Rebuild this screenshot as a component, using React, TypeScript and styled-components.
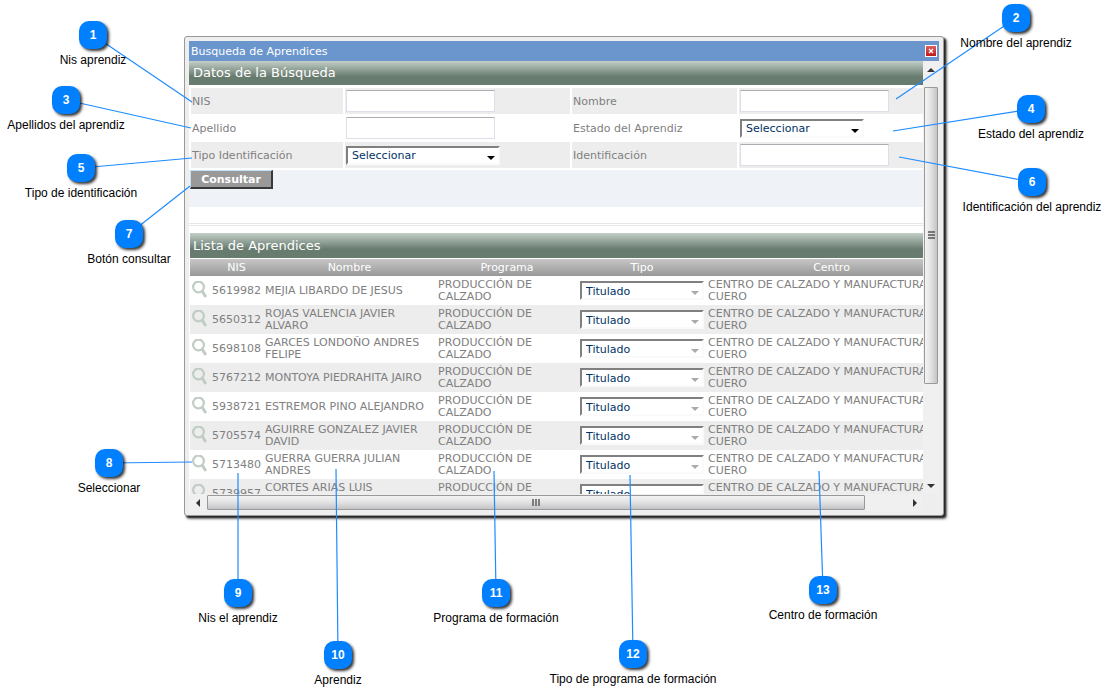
import React from "react";
import styled, { createGlobalStyle } from "styled-components";

const GlobalStyle = createGlobalStyle`
  *, *::before, *::after { box-sizing: border-box; }
  body { margin: 0; background: #fff; }
`;

const verdana = `Verdana, "DejaVu Sans", sans-serif`;
const arial = `Arial, "Liberation Sans", sans-serif`;

const Canvas = styled.main`
  position: relative;
  min-height: 100vh;
  padding: 36px 165px 0 184px;
  overflow: hidden;
  font-family: ${verdana};
  font-size: 11px;
  color: #808080;
`;

const Dialog = styled.section`
  padding: 4px;
  background: #eeeeee;
  border: 1px solid #999;
  border-radius: 3px;
  box-shadow: 2px 2px 2px #222, 3px 3px 3px rgba(0, 0, 0, 0.4);
`;

const TitleBar = styled.header`
  display: flex;
  align-items: center;
  justify-content: space-between;
  height: 20px;
  padding: 0 2px;
  background: #6a96cd;
  color: #fff;
`;

const DialogTitle = styled.h1`
  margin: 0;
  font-size: 11px;
  line-height: 20px;
  padding-top: 2px;
  font-weight: normal;
`;

const CloseButton = styled.button`
  display: flex;
  align-items: center;
  justify-content: center;
  width: 12px;
  height: 12px;
  padding: 0;
  border: 1px solid #fff;
  background: linear-gradient(#e06060, #c01818);
`;

const Body = styled.div`
  display: grid;
  grid-template-columns: minmax(0, 1fr) 16px;
  grid-template-rows: 433px 17px;
`;

const Viewport = styled.div`
  overflow: hidden;
  background: #fff;
`;

const SectionTitle = styled.h2<{ $indent?: boolean }>`
  margin: 0;
  margin-left: ${(p) => (p.$indent ? "1px" : "0")};
  padding-left: ${(p) => (p.$indent ? "3px" : "4px")};
  height: ${(p) => (p.$indent ? "25px" : "24px")};
  line-height: ${(p) => (p.$indent ? "26px" : "24px")};
  font-size: 13px;
  font-weight: normal;
  color: #fff;
  background: linear-gradient(#c3cfc8, #687b6f 65%);
`;

const SearchForm = styled.form`
  padding-top: 3px;
  border-bottom: 3px double #e6e6e6;
`;

const Fields = styled.div`
  display: grid;
  grid-template-columns: 152px 225px 165px minmax(0, 1fr);
  grid-auto-rows: 26px;
  gap: 1px 2px;
  padding-left: 2px;
`;

const FieldLabel = styled.label<{ $shaded: boolean }>`
  padding-left: 1px;
  line-height: 28px;
  background: ${(p) => (p.$shaded ? "#ededed" : "#fff")};
`;

const FieldCell = styled.div<{ $shaded: boolean }>`
  display: flex;
  align-items: center;
  padding-left: 1px;
  background: ${(p) => (p.$shaded ? "#ededed" : "#fff")};
`;

const TextInput = styled.input`
  width: 149px;
  height: 22px;
  border: 1px solid #dcdfe8;
  border-top-color: #abadb3;
  border-radius: 1px;
  background: #fff;
  font: 11px ${verdana};
`;

const SelectBox = styled.span<{ $width: number }>`
  position: relative;
  display: block;
  width: ${(p) => p.$width}px;
  height: 19px;
`;

const Select = styled.select`
  appearance: none;
  display: block;
  width: 100%;
  height: 19px;
  padding: 1px 0 0 4px;
  border: 2px solid #fafafa;
  border-top-color: #808080;
  border-left-color: #808080;
  border-radius: 0;
  background: #fff;
  color: #003366;
  font: 11px ${verdana};
  opacity: 1;
`;

const SelectArrow = styled.svg`
  position: absolute;
  right: 5px;
  bottom: 5px;
  pointer-events: none;
`;

const Actions = styled.div`
  height: 37px;
  margin: 2px 0 16px;
  padding-left: 1px;
  background: #eff3f8;
`;

const SubmitButton = styled.button`
  display: block;
  width: 83px;
  height: 19px;
  padding: 1px 0 0;
  border: 2px solid #383838;
  border-top: 1px solid #c0e2fa;
  border-left: 1px solid #c0e2fa;
  background: #999;
  color: #fff;
  font: bold 11px ${verdana};
`;

const Results = styled.section`
  padding-top: 7px;
`;

const Table = styled.table`
  width: 767px;
  margin: 1px 0 0 1px;
  table-layout: fixed;
  border-collapse: collapse;
`;

const Column = styled.col<{ $width: number }>`
  width: ${(p) => p.$width}px;
`;

const HeadCell = styled.th`
  height: 17px;
  padding: 1px 2px 0;
  font-size: 11px;
  line-height: 16px;
  font-weight: normal;
  color: #fff;
`;

const HeadRow = styled.tr`
  background: linear-gradient(#c6c6c6, #989898);
`;

const Row = styled.tr`
  height: 29px;
  background: #fff;
  &:nth-child(even) {
    background: #ededed;
  }
`;

const Cell = styled.td`
  height: 29px;
  padding: 0 2px;
  font-size: 11px;
  line-height: 12px;
  white-space: pre;
`;

const PickButton = styled.button`
  display: block;
  padding: 0;
  border: 0;
  background: none;
`;

const VTrack = styled.div`
  display: flex;
  flex-direction: column;
  background: #f0f0f0;
`;

const HTrack = styled.div`
  display: flex;
  background: #f0f0f0;
  padding-top: 1px;
`;

const VArrow = styled.span`
  display: flex;
  align-items: center;
  justify-content: center;
  height: 17px;
`;

const HArrow = styled(VArrow)`
  width: 17px;
  height: 16px;
`;

const VThumb = styled.div`
  display: flex;
  align-items: center;
  justify-content: center;
  margin: 9px 1px 0 1px;
  height: 297px;
  border: 1px solid #999;
  border-radius: 1px;
  background: linear-gradient(90deg, #f4f4f4, #e4e4e5 45%, #c4c4c8);
`;

const HThumb = styled.div`
  display: flex;
  align-items: center;
  justify-content: center;
  height: 15px;
  margin-left: 1px;
  flex: 0 1 658px;
  border: 1px solid #999;
  border-radius: 1px;
  background: linear-gradient(#f4f4f4, #e4e4e5 45%, #c4c4c8);
`;

const Spacer = styled.span`
  flex: 1;
`;

const CalloutRoot = styled.div<{ $side: "left" | "right"; $x: number; $y: number }>`
  position: absolute;
  ${(p) => p.$side}: ${(p) => p.$x}px;
  top: ${(p) => p.$y}px;
  width: 0;
  height: 0;
`;

const Leader = styled.svg`
  position: absolute;
  left: 0;
  top: 0;
  width: 1px;
  height: 1px;
  overflow: visible;
  pointer-events: none;
`;

const Badge = styled.span`
  position: absolute;
  left: -14px;
  top: -14px;
  width: 28px;
  height: 28px;
  border-radius: 10px;
  background: #0080ff;
  box-shadow: 2px 2px 3px rgba(0, 0, 0, 0.8);
  color: #fff;
  font: bold 12px/28px ${arial};
  text-align: center;
`;

const Caption = styled.span`
  position: absolute;
  top: 17px;
  left: 0;
  transform: translateX(-50%);
  white-space: nowrap;
  color: #000;
  font: 12px/16px ${arial};
`;

type CalloutData = {
  n: number;
  text: string;
  side: "left" | "right";
  x: number;
  y: number;
  dx: number;
  dy: number;
};

const callouts: CalloutData[] = [
  { n: 1, text: "Nis aprendiz", side: "left", x: 93, y: 35, dx: 99, dy: 67 },
  { n: 2, text: "Nombre del aprendiz", side: "right", x: 93, y: 18, dx: -120, dy: 81 },
  { n: 3, text: "Apellidos del aprendiz", side: "left", x: 66, y: 100, dx: 125, dy: 28 },
  { n: 4, text: "Estado del aprendiz", side: "right", x: 78, y: 109, dx: -138, dy: 22 },
  { n: 5, text: "Tipo de identificación", side: "left", x: 81, y: 168, dx: 111, dy: -10 },
  { n: 6, text: "Identificación del aprendiz", side: "right", x: 77, y: 182, dx: -133, dy: -25 },
  { n: 7, text: "Botón consultar", side: "left", x: 129, y: 234, dx: 61, dy: -48 },
  { n: 8, text: "Seleccionar", side: "left", x: 109, y: 463, dx: 83, dy: -1 },
  { n: 9, text: "Nis el aprendiz", side: "left", x: 238, y: 593, dx: 0, dy: -120 },
  { n: 10, text: "Aprendiz", side: "left", x: 338, y: 655, dx: -2, dy: -186 },
  { n: 11, text: "Programa de formación", side: "left", x: 496, y: 593, dx: -2, dy: -122 },
  { n: 12, text: "Tipo de programa de formación", side: "left", x: 633, y: 654, dx: -3, dy: -179 },
  { n: 13, text: "Centro de formación", side: "left", x: 823, y: 590, dx: -4, dy: -119 },
];

function Callout({ item }: { item: CalloutData }) {
  return (
    <CalloutRoot $side={item.side} $x={item.x} $y={item.y}>
      <Badge>{item.n}</Badge>
      <Caption>{item.text}</Caption>
    </CalloutRoot>
  );
}

function CalloutLine({ item }: { item: CalloutData }) {
  return (
    <CalloutRoot $side={item.side} $x={item.x} $y={item.y}>
      <Leader aria-hidden="true">
        <line x1="0" y1="0" x2={item.dx} y2={item.dy} stroke="#1e8cff" strokeWidth="1.2" />
      </Leader>
    </CalloutRoot>
  );
}

function DropDown({ id, label, width, value, disabled }: {
  id?: string; label?: string; width: number; value: string; disabled?: boolean;
}) {
  return (
    <SelectBox $width={width}>
      <Select id={id} aria-label={label} disabled={disabled} defaultValue={value}>
        <option>{value}</option>
      </Select>
      <SelectArrow width="8" height="4" viewBox="0 0 8 4" aria-hidden="true">
        <path d="M0 0H8L4 4Z" fill={disabled ? "#aaa" : "#000"} />
      </SelectArrow>
    </SelectBox>
  );
}

function Magnifier() {
  return (
    <svg width="16" height="17" viewBox="0 0 16 17" fill="none" aria-hidden="true">
      <circle cx="6.5" cy="6" r="5.4" stroke="#c0cdc4" strokeWidth="2.2" />
      <path d="M10.4 10.5L13.2 15" stroke="#c0cdc4" strokeWidth="3" strokeLinecap="round" />
    </svg>
  );
}

const columnWidths = [20, 53, 173, 142, 128, 251];

const apprentices: [string, string][] = [
  ["5619982", "MEJIA LIBARDO DE JESUS"],
  ["5650312", "ROJAS VALENCIA JAVIER\nALVARO"],
  ["5698108", "GARCES LONDOÑO ANDRES\nFELIPE"],
  ["5767212", "MONTOYA PIEDRAHITA JAIRO"],
  ["5938721", "ESTREMOR PINO ALEJANDRO"],
  ["5705574", "AGUIRRE GONZALEZ JAVIER\nDAVID"],
  ["5713480", "GUERRA GUERRA JULIAN\nANDRES"],
  ["5739957", "CORTES ARIAS LUIS\n "],
];

export default function App() {
  return (
    <>
      <GlobalStyle />
      <Canvas>
        <Dialog>
          <TitleBar>
            <DialogTitle>Busqueda de Aprendices</DialogTitle>
            <CloseButton type="button" aria-label="Cerrar">
              <svg width="6" height="6" viewBox="0 0 6 6" aria-hidden="true">
                <path d="M1 1L5 5M5 1L1 5" stroke="#fff" strokeWidth="1.3" />
              </svg>
            </CloseButton>
          </TitleBar>
          <Body>
            <Viewport>
              <SectionTitle>Datos de la Búsqueda</SectionTitle>
              <SearchForm onSubmit={(e: React.FormEvent) => e.preventDefault()}>
                <Fields>
                  <FieldLabel $shaded htmlFor="nis">NIS</FieldLabel>
                  <FieldCell $shaded><TextInput id="nis" type="text" /></FieldCell>
                  <FieldLabel $shaded htmlFor="nombre">Nombre</FieldLabel>
                  <FieldCell $shaded><TextInput id="nombre" type="text" /></FieldCell>

                  <FieldLabel $shaded={false} htmlFor="apellido">Apellido</FieldLabel>
                  <FieldCell $shaded={false}><TextInput id="apellido" type="text" /></FieldCell>
                  <FieldLabel $shaded={false} htmlFor="estado">Estado del Aprendiz</FieldLabel>
                  <FieldCell $shaded={false}><DropDown id="estado" width={124} value="Seleccionar" /></FieldCell>

                  <FieldLabel $shaded htmlFor="tipo">Tipo Identificación</FieldLabel>
                  <FieldCell $shaded><DropDown id="tipo" width={154} value="Seleccionar" /></FieldCell>
                  <FieldLabel $shaded htmlFor="identificacion">Identificación</FieldLabel>
                  <FieldCell $shaded><TextInput id="identificacion" type="text" /></FieldCell>
                </Fields>
                <Actions>
                  <SubmitButton type="submit">Consultar</SubmitButton>
                </Actions>
              </SearchForm>
              <Results>
                <SectionTitle $indent>Lista de Aprendices</SectionTitle>
                <Table>
                  <colgroup>
                    {columnWidths.map((width) => (
                      <Column key={width} $width={width} />
                    ))}
                  </colgroup>
                  <thead>
                    <HeadRow>
                      <HeadCell />
                      <HeadCell scope="col">NIS</HeadCell>
                      <HeadCell scope="col">Nombre</HeadCell>
                      <HeadCell scope="col">Programa</HeadCell>
                      <HeadCell scope="col">Tipo</HeadCell>
                      <HeadCell scope="col">Centro</HeadCell>
                    </HeadRow>
                  </thead>
                  <tbody>
                    {apprentices.map(([nis, name]) => (
                      <Row key={nis}>
                        <Cell>
                          <PickButton type="button" aria-label={`Seleccionar ${nis}`}>
                            <Magnifier />
                          </PickButton>
                        </Cell>
                        <Cell>{nis}</Cell>
                        <Cell>{name}</Cell>
                        <Cell>{"PRODUCCIÓN DE\nCALZADO"}</Cell>
                        <Cell>
                          <DropDown label={`Tipo ${nis}`} width={124} value="Titulado" disabled />
                        </Cell>
                        <Cell>{"CENTRO DE CALZADO Y MANUFACTURA\nCUERO"}</Cell>
                      </Row>
                    ))}
                  </tbody>
                </Table>
              </Results>
            </Viewport>
            <VTrack aria-hidden="true">
              <VArrow>
                <svg width="8" height="4" viewBox="0 0 8 4"><path d="M0 4H8L4 0Z" fill="#333" /></svg>
              </VArrow>
              <VThumb>
                <svg width="7" height="9" viewBox="0 0 7 9"><path d="M0 1H7M0 4H7M0 7H7" stroke="#555" strokeWidth="1.4" /></svg>
              </VThumb>
              <Spacer />
              <VArrow>
                <svg width="8" height="4" viewBox="0 0 8 4"><path d="M0 0H8L4 4Z" fill="#333" /></svg>
              </VArrow>
            </VTrack>
            <HTrack aria-hidden="true">
              <HArrow>
                <svg width="4" height="8" viewBox="0 0 4 8"><path d="M4 0V8L0 4Z" fill="#333" /></svg>
              </HArrow>
              <HThumb>
                <svg width="9" height="7" viewBox="0 0 9 7"><path d="M1 0V7M4 0V7M7 0V7" stroke="#555" strokeWidth="1.4" /></svg>
              </HThumb>
              <Spacer />
              <HArrow>
                <svg width="4" height="8" viewBox="0 0 4 8"><path d="M0 0V8L4 4Z" fill="#333" /></svg>
              </HArrow>
            </HTrack>
          </Body>
        </Dialog>
        {callouts.map((item) => (
          <CalloutLine key={item.n} item={item} />
        ))}
        {callouts.map((item) => (
          <Callout key={item.n} item={item} />
        ))}
      </Canvas>
    </>
  );
}
